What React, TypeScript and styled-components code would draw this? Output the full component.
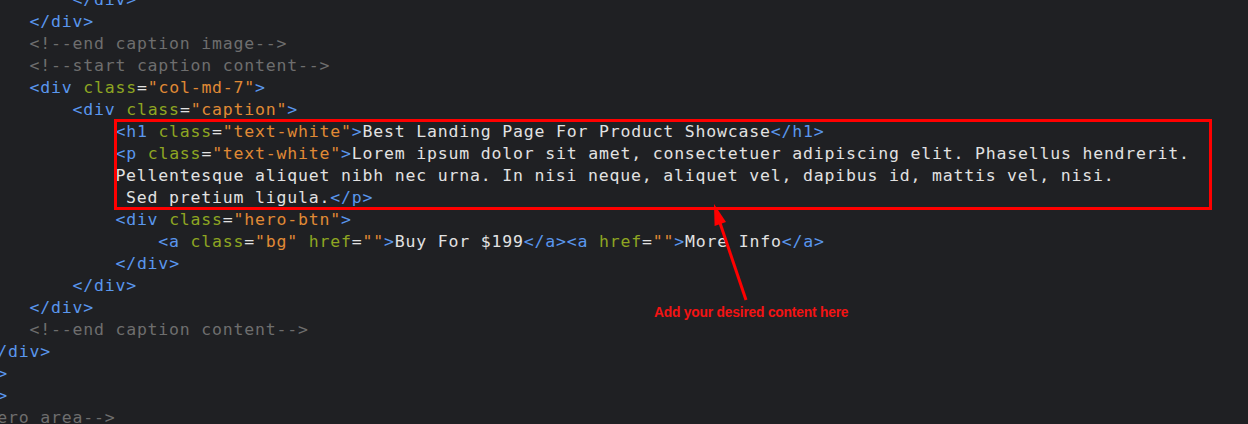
import React from "react";
import styled, { createGlobalStyle } from "styled-components";

const Global = createGlobalStyle`
  html, body { margin: 0; padding: 0; background: #1f2023; }
  #root { width: 1248px; height: 424px; }
`;

const Editor = styled.div`
  position: relative;
  width: 1248px;
  height: 424px;
  overflow: hidden;
  background: #1f2023;
`;

const Code = styled.div`
  margin: -11px 0 0 -99.5px;
  font-family: "DejaVu Sans Mono", "Liberation Mono", monospace;
  font-size: 16.5px;
  letter-spacing: 0.81px;
  color: #e2e2e2;
`;

const Line = styled.div`
  height: 22px;
  line-height: 22px;
  white-space: pre;
`;

const Tok = styled.span<{ $kind: string }>`
  color: ${(p) =>
    p.$kind === "tag"
      ? "#5a97ee"
      : p.$kind === "attr"
      ? "#8ea622"
      : p.$kind === "str"
      ? "#e08a35"
      : p.$kind === "comment"
      ? "#6e6e6e"
      : "#e2e2e2"};
`;

const HighlightBox = styled.div`
  position: absolute;
  left: 114px;
  top: 119px;
  width: 1092px;
  height: 85px;
  border: 3px solid #ff0000;
`;

const ArrowSvg = styled.svg`
  position: absolute;
  left: 0;
  top: 0;
  pointer-events: none;
`;

const Note = styled.div`
  position: absolute;
  left: 654px;
  top: 305px;
  font-family: "Liberation Sans", Arial, sans-serif;
  font-weight: bold;
  font-size: 13.8px;
  letter-spacing: -0.2px;
  line-height: 16px;
  color: #f31313;
  white-space: nowrap;
`;

const lines: string[] = [
  `            </div>`,
  `        </div>`,
  `        <!--end caption image-->`,
  `        <!--start caption content-->`,
  `        <div class="col-md-7">`,
  `            <div class="caption">`,
  `                <h1 class="text-white">Best Landing Page For Product Showcase</h1>`,
  `                <p class="text-white">Lorem ipsum dolor sit amet, consectetuer adipiscing elit. Phasellus hendrerit.`,
  `                Pellentesque aliquet nibh nec urna. In nisi neque, aliquet vel, dapibus id, mattis vel, nisi.`,
  `                 Sed pretium ligula.</p>`,
  `                <div class="hero-btn">`,
  `                    <a class="bg" href="">Buy For $199</a><a href="">More Info</a>`,
  `                </div>`,
  `            </div>`,
  `        </div>`,
  `        <!--end caption content-->`,
  `    </div>`,
  `</div>`,
  `</div>`,
  `<!--end hero area-->`,
];

// shift everything right by 4 spaces so the last comment can start further left
const shifted = lines.map((l, i) => (i === lines.length - 1 ? l : "    " + l));

type Token = [string, string];

function tokenize(line: string): Token[] {
  const out: Token[] = [];
  let i = 0;
  let inTag = false;
  while (i < line.length) {
    const rest = line.slice(i);
    let m: RegExpMatchArray | null;
    if ((m = rest.match(/^<!--.*?-->/))) {
      out.push(["comment", m[0]]);
    } else if ((m = rest.match(/^<\/?[a-zA-Z0-9]+/))) {
      out.push(["tag", m[0]]);
      inTag = true;
    } else if (inTag && (m = rest.match(/^>/))) {
      out.push(["tag", m[0]]);
      inTag = false;
    } else if (inTag && (m = rest.match(/^"[^"]*"/))) {
      out.push(["str", m[0]]);
    } else if (inTag && (m = rest.match(/^[a-zA-Z-]+/))) {
      out.push(["attr", m[0]]);
    } else if (inTag) {
      m = rest.match(/^./) as RegExpMatchArray;
      out.push(["text", m[0]]);
    } else {
      m = rest.match(/^[^<]+/) || (rest.match(/^./) as RegExpMatchArray);
      out.push(["text", m[0]]);
    }
    i += m[0].length;
  }
  return out;
}

export default function App() {
  return (
    <>
      <Global />
      <Editor>
        <Code>
          {shifted.map((l, i) => (
            <Line key={i}>
              {tokenize(l).map(([k, t], j) => (
                <Tok key={j} $kind={k}>
                  {t}
                </Tok>
              ))}
            </Line>
          ))}
        </Code>
        <HighlightBox />
        <ArrowSvg width="1248" height="424" viewBox="0 0 1248 424">
          <line x1="746" y1="300" x2="719" y2="220" stroke="#ff0000" strokeWidth="3" />
          <polygon points="714,204 726,222 714.6,226" fill="#ff0000" />
        </ArrowSvg>
        <Note>Add your desired content here</Note>
      </Editor>
    </>
  );
}
